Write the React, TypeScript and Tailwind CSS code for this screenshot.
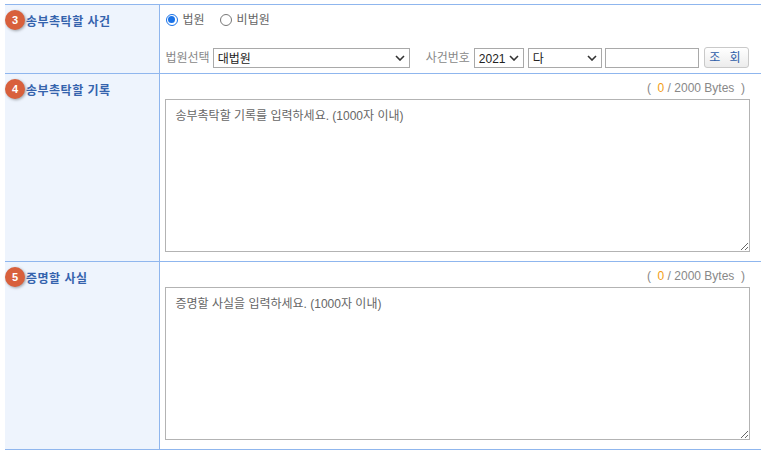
import React from 'react';

const FONT = { fontFamily: '"Liberation Sans", "Noto Sans CJK KR", sans-serif' };

function Badge({ n }: { n: number }) {
  return (
    <span className="absolute left-0 top-[5px] flex h-[20px] w-[20px] items-center justify-center rounded-full bg-[#d8603c] text-[11px] font-bold text-white shadow-[1px_1px_3px_rgba(0,0,0,0.35)]">
      {n}
    </span>
  );
}

function Label({ n, text }: { n: number; text: string }) {
  return (
    <th className="relative w-[154px] border-r border-[#8fb6ee] bg-[#eef4fd] p-0 text-left align-top font-normal">
      <Badge n={n} />
      <div className="pl-[21px] pt-[8px] text-[12px] font-bold tracking-[0.5px] text-[#3563ad]">{text}</div>
    </th>
  );
}

function Chevron() {
  return (
    <svg width="10" height="6" viewBox="0 0 10 6" className="pointer-events-none absolute right-[4px] top-1/2 -translate-y-1/2">
      <path d="M1 1l4 4 4-4" fill="none" stroke="#333" strokeWidth="1.6" />
    </svg>
  );
}

function Select({ w, value }: { w: string; value: string }) {
  return (
    <div className={`relative h-[20px] ${w} border border-[#a9a9a9] bg-white`}>
      <span className="absolute left-[4px] top-[1px] text-[12px] text-[#222]">{value}</span>
      <Chevron />
    </div>
  );
}

function Bytes() {
  return (
    <div className="pr-[16px] text-right text-[12px] leading-[14px] text-[#888]">
      (&nbsp;&nbsp;<span className="text-[#f39c12]">0</span> / 2000 Bytes&nbsp;&nbsp;)
    </div>
  );
}

function Area({ placeholder }: { placeholder: string }) {
  return (
    <textarea
      placeholder={placeholder}
      className="block h-[153px] w-[585px] resize border border-[#b3b3b3] px-[10px] py-[7px] text-[12px] text-[#555] placeholder:text-[#666] outline-none"
      style={FONT}
    />
  );
}

export default function App() {
  return (
    <div className="bg-white pl-[5px] pt-[4px]" style={FONT}>
      <table className="w-[756px] border-collapse">
        <tbody>
          <tr className="h-[69px] border-t border-b border-[#8fb6ee]">
            <Label n={3} text="송부촉탁할 사건" />
            <td className="p-0 pl-[6px] align-top">
              <div className="flex h-[28px] items-center gap-[5px] pt-[1px] text-[12px] text-[#666]">
                <span className="flex h-[12px] w-[12px] items-center justify-center rounded-full border border-[#1a73e8]">
                  <span className="h-[7px] w-[7px] rounded-full bg-[#1a73e8]" />
                </span>
                <span>법원</span>
                <span className="ml-[10px] h-[12px] w-[12px] rounded-full border border-[#777]" />
                <span>비법원</span>
              </div>
              <div className="mt-[14px] flex items-center text-[12px] text-[#888]">
                <span className="mr-[3px]">법원선택</span>
                <Select w="w-[197px]" value="대법원" />
                <span className="ml-[16px] mr-[4px]">사건번호</span>
                <Select w="w-[50px]" value="2021" />
                <div className="w-[4px]" />
                <Select w="w-[74px]" value="다" />
                <div className="ml-[3px] h-[20px] w-[94px] border border-[#a9a9a9] bg-white" />
                <button className="ml-[5px] h-[21px] w-[45px] rounded-[3px] border border-[#c9c9c9] bg-gradient-to-b from-[#ffffff] to-[#ececec] text-[12px] tracking-[3px] text-[#2c5ca8]">
                  조 회
                </button>
              </div>
            </td>
          </tr>
          <tr className="h-[188px] border-b border-[#8fb6ee]">
            <Label n={4} text="송부촉탁할 기록" />
            <td className="p-0 pl-[5px] pt-[7px] align-top">
              <Bytes />
              <div className="mt-[4px]">
                <Area placeholder="송부촉탁할 기록를 입력하세요. (1000자 이내)" />
              </div>
            </td>
          </tr>
          <tr className="h-[188px] border-b border-[#8fb6ee]">
            <Label n={5} text="증명할 사실" />
            <td className="p-0 pl-[5px] pt-[7px] align-top">
              <Bytes />
              <div className="mt-[4px]">
                <Area placeholder="증명할 사실을 입력하세요. (1000자 이내)" />
              </div>
            </td>
          </tr>
        </tbody>
      </table>
    </div>
  );
}
